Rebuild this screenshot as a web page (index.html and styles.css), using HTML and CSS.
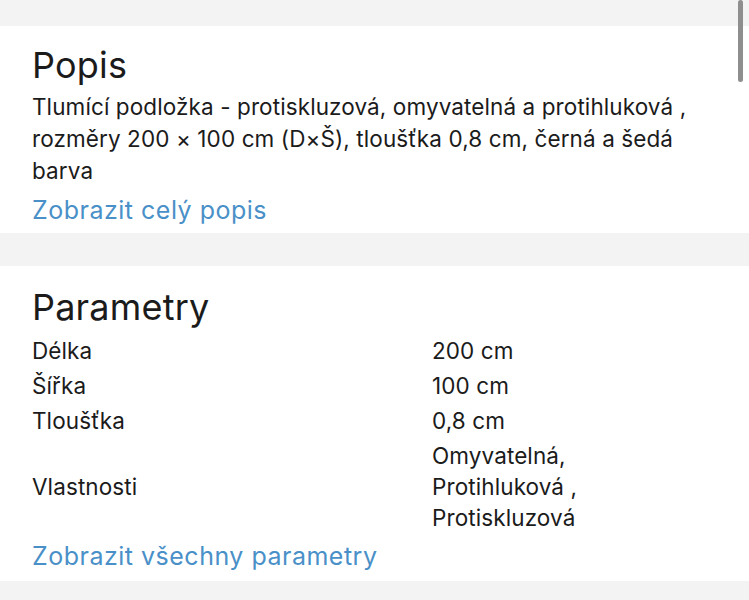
FILE: index.html
```html
<!DOCTYPE html>
<html lang="cs">
<head>
<meta charset="utf-8">
<link rel="stylesheet" href="styles.css">
</head>
<body>
<div class="page">
  <section class="card card-popis">
    <h2 class="title">Popis</h2>
    <p class="desc">Tlumící podložka - protiskluzová, omyvatelná a protihluková , rozměry 200 × 100 cm (D×Š), tloušťka 0,8 cm, černá a šedá barva</p>
    <a class="link" href="#">Zobrazit celý popis</a>
  </section>
  <section class="card card-params">
    <h2 class="title">Parametry</h2>
    <div class="params">
      <div class="label">Délka</div><div class="value">200 cm</div>
      <div class="label">Šířka</div><div class="value">100 cm</div>
      <div class="label">Tloušťka</div><div class="value">0,8 cm</div>
      <div class="label">Vlastnosti</div><div class="value">Omyvatelná,<br>Protihluková ,<br>Protiskluzová</div>
    </div>
    <a class="link link-params" href="#">Zobrazit všechny parametry</a>
  </section>
</div>
<div class="scrollbar"></div>
</body>
</html>
```
FILE: styles.css
```css
html, body {
  margin: 0;
  padding: 0;
  background: #f3f3f3;
  height: 100%;
  overflow: hidden;
}
body {
  font-family: Inter, "Noto Sans", sans-serif;
  color: #1b1b1b;
}
.page {
  padding-top: 26px;
  display: flex;
  flex-direction: column;
  gap: 33px;
}
.card {
  background: #fff;
  padding: 0 32px;
  display: flex;
  flex-direction: column;
  align-items: flex-start;
}
.card-popis {
  height: 207px;
  padding-top: 18px;
  box-sizing: border-box;
}
.card-params {
  height: 315px;
  padding-top: 20px;
  box-sizing: border-box;
}
.title {
  margin: 0;
  font-size: 36px;
  font-weight: 400;
  line-height: 42px;
  letter-spacing: 0.2px;
}
.desc {
  margin: 5px 0 0;
  font-size: 22.5px;
  line-height: 32px;
  letter-spacing: 0.1px;
}
.link {
  color: #4a90c8;
  text-decoration: none;
  font-size: 25px;
  line-height: 32px;
  margin-top: 7px;
  letter-spacing: 0.5px;
}
.params {
  display: grid;
  grid-template-columns: 400px 1fr;
  row-gap: 4px;
  margin-top: 7px;
  font-size: 22.5px;
  line-height: 31px;
  letter-spacing: 0.1px;
}
.label {
  align-self: center;
}
.link-params {
  margin-top: 7px;
}
.scrollbar {
  position: absolute;
  top: 0;
  left: 738px;
  width: 5px;
  height: 82px;
  background: #8e8e8e;
  border-radius: 3px;
}
```
